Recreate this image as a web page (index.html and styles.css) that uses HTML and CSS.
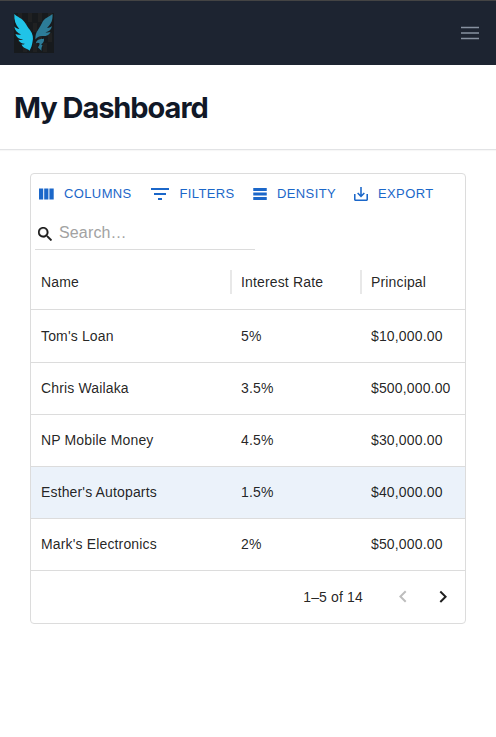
FILE: index.html
```html
<!DOCTYPE html>
<html lang="en">
<head>
<meta charset="utf-8">
<title>My Dashboard</title>
<link rel="stylesheet" href="styles.css">
</head>
<body>
<nav class="navbar">
  <svg class="logo" viewBox="0 0 40 40" aria-label="Logo">
    <rect width="40" height="40" fill="#171a1d"/>
    <g fill="#202122"><path d="M4 0h4v9H4zM14 0h4v9h-4zM24 0h4v9h-4zM34 0h4v9h-4zM9 10h4v9H9zM19 10h4v9h-4zM29 10h4v9h-4zM4 20h4v9H4zM14 20h4v9h-4zM24 20h4v9h-4zM34 20h4v9h-4zM9 30h4v9H9zM19 30h4v9h-4zM29 30h4v9h-4z"/></g>
    <path fill="#20c3e8" d="M.3 1C3 4 8 5 10.500 9c2 3 3 5 5.500 8 3 4 3.500 8 2.500 12-.5 3-1.200 6-3 8.700C13 35 9.500 36 7.500 31.500c1.500.2 2.500 0 3.300-.8-2.800-.2-5.300-1.200-6.300-4 1.500.5 3.500.5 4.500-.2-3.500-.5-6.500-2-7.500-5.500 1.500.8 3.800 1 5.500.4C3 20 .8 17 .3 13.500c1.500 1.500 3.200 2.300 5 2.500C1.500 12 0 7 .3 1z"/>
    <path fill="#2c7c98" d="M38.500 1c-3 2.500-7 3.500-9.500 7-1.500 3-3 6-5 9-2 2.500-3 6-2.500 9.500 1.500-2.300 3.500-3.500 6-3.500 4 .5 7.500-.5 9-4-1.500.5-3.500.7-5 .2 3.500-.7 6-2.700 6.500-6.200-1.500 1.500-3.500 2-5 1.700 4-3.200 6-7.700 5.500-13.700zM30 25.500c-1.500.7-2.500.5-4 .7-2.300.3-3.700 1.800-4.200 4 1.500-.7 2.700-.7 3.700 0 .2 1.800-.7 3-1.700 4l3.700 3.500c-.2-2.500 0-3.700 1.200-5.200-.7 0-1.200-.5-1.400-1.200 2-1 3-3 2.700-5.800z"/>
  </svg>
  <svg class="menu" viewBox="0 0 18 14" aria-label="Menu"><path d="M0 1.500h18M0 7h18M0 12.500h18"/></svg>
</nav>
<header class="page-header"><h1>My Dashboard</h1></header>
<main class="content">
  <section class="grid">
    <div class="toolbar">
      <button class="tool columns"><svg viewBox="0 0 15 12"><path d="M0 .5h4.200v11H0zM5.200.5h4.200v11H5.200zM10.400.5h4.300v11h-4.300z"/></svg><span>COLUMNS</span></button>
      <button class="tool filters"><svg viewBox="3 6 18 12"><path d="M10 18h4v-2h-4zM3 6v2h18V6zm3 7h12v-2H6z"/></svg><span>FILTERS</span></button>
      <button class="tool density"><svg viewBox="3 4 18 16"><path d="M21 8H3V4h18zM21 10H3v4h18zM21 16H3v4h18z"/></svg><span>DENSITY</span></button>
      <button class="tool export"><svg viewBox="3 3 18 18"><path d="M19 12v7H5v-7H3v7c0 1.100.9 2 2 2h14c1.100 0 2-.9 2-2v-7zm-6 .67l2.590-2.580L17 11.500l-5 5-5-5 1.410-1.410L11 12.670V3h2z"/></svg><span>EXPORT</span></button>
    </div>
    <label class="search">
      <svg viewBox="3 3 17.5 17.5"><path d="M15.500 14h-.79l-.28-.27C15.410 12.590 16 11.110 16 9.500 16 5.910 13.090 3 9.500 3S3 5.910 3 9.500 5.910 16 9.500 16c1.610 0 3.090-.59 4.230-1.570l.27.28v.79l5 4.990L20.490 19l-4.990-5zm-6 0C7.010 14 5 11.990 5 9.500S7.010 5 9.500 5 14 7.010 14 9.500 11.990 14 9.500 14z"/></svg>
      <input type="text" placeholder="Search…">
    </label>
    <div class="row head"><span>Name</span><span>Interest Rate</span><span>Principal</span></div>
    <div class="row"><span>Tom's Loan</span><span>5%</span><span>$10,000.00</span></div>
    <div class="row"><span>Chris Wailaka</span><span>3.5%</span><span>$500,000.00</span></div>
    <div class="row"><span>NP Mobile Money</span><span>4.5%</span><span>$30,000.00</span></div>
    <div class="row selected"><span>Esther's Autoparts</span><span>1.5%</span><span>$40,000.00</span></div>
    <div class="row"><span>Mark's Electronics</span><span>2%</span><span>$50,000.00</span></div>
    <div class="footer">
      <span>1–5 of 14</span>
      <svg class="prev" viewBox="0 0 24 24"><path d="M15.410 16.090l-4.580-4.590 4.580-4.590L14 5.500l-6 6 6 6z"/></svg>
      <svg class="next" viewBox="0 0 24 24"><path d="M8.590 16.340l4.580-4.590-4.580-4.590L10 5.750l6 6-6 6z"/></svg>
    </div>
  </section>
</main>
</body>
</html>
```
FILE: styles.css
```css
* { box-sizing: border-box; }
body { margin: 0; background: #fff; font-family: "Liberation Sans", Arial, sans-serif; color: rgba(0, 0, 0, .87); }
svg { display: block; flex: none; fill: currentColor; }
.navbar { height: 65px; padding: 0 17px 0 14px; display: flex; justify-content: space-between; align-items: center; background: #1d2431; border-top: 1px solid #444; }
.logo { width: 40px; height: 40px; }
.menu { width: 18px; height: 14px; fill: none; stroke: #8791a0; stroke-width: 1.5; }
.page-header { height: 85px; padding: 2px 14px 0; display: flex; align-items: center; border-bottom: 1px solid #e2e3e5; box-shadow: 0 1px 1px rgba(0, 0, 0, .03); }
h1 { margin: 0; font: 700 29px/36px Inter, sans-serif; letter-spacing: -1.05px; color: #111827; }
.content { padding: 23px 30px; }
.grid { height: 451px; border: 1px solid #dcdcdc; border-radius: 4px; font-size: 14px; letter-spacing: .15px; }
.toolbar { height: 39px; padding-left: 8px; display: flex; align-items: center; color: #1b67c9; }
.tool { display: flex; align-items: center; padding: 0; border: 0; background: none; color: inherit; font: 13px/23px "Liberation Sans", Arial, sans-serif; letter-spacing: .38px; }
.columns { width: 112px; gap: 10px; }
.columns svg { width: 15px; height: 12px; }
.filters { width: 102px; gap: 10.5px; }
.filters svg { width: 18px; height: 12px; }
.density { width: 101px; gap: 10px; }
.density svg { width: 14px; height: 12px; }
.export { gap: 10px; }
.export svg { width: 14px; height: 14px; }
.search { width: 220px; height: 37px; margin-left: 4px; padding: 4px 0 0 3px; display: flex; align-items: center; gap: 7px; border-bottom: 1px solid #dcdcdc; }
.search svg { width: 14px; height: 14px; margin-top: 1px; stroke: currentColor; stroke-width: .4; }
.search input { width: 180px; padding: 0 0 1px; border: 0; outline: 0; background: none; font: 16px/23px "Liberation Sans", Arial, sans-serif; letter-spacing: .15px; }
.search input::placeholder { color: #a2a2a2; opacity: 1; }
.row { height: 52px; padding-bottom: 1px; display: grid; grid-template-columns: 200px 130px 1fr; align-items: center; border-bottom: 1px solid #dcdcdc; }
.row span { padding-left: 10px; }
.head { height: 60px; padding: 5px 0 0; }
.head span { line-height: 24px; }
.head span + span { border-left: 2px solid #e8e8e8; padding-left: 9px; margin-left: -1px; }
.head + .row { height: 53px; padding-bottom: 0; }
.selected { background: #ebf2fa; }
.footer { height: 52px; padding-right: 10px; display: flex; align-items: center; justify-content: flex-end; }
.prev { width: 24px; height: 24px; margin-left: 28px; color: #bdbdbd; }
.next { width: 24px; height: 24px; margin-left: 16px; color: #202020; }
```
